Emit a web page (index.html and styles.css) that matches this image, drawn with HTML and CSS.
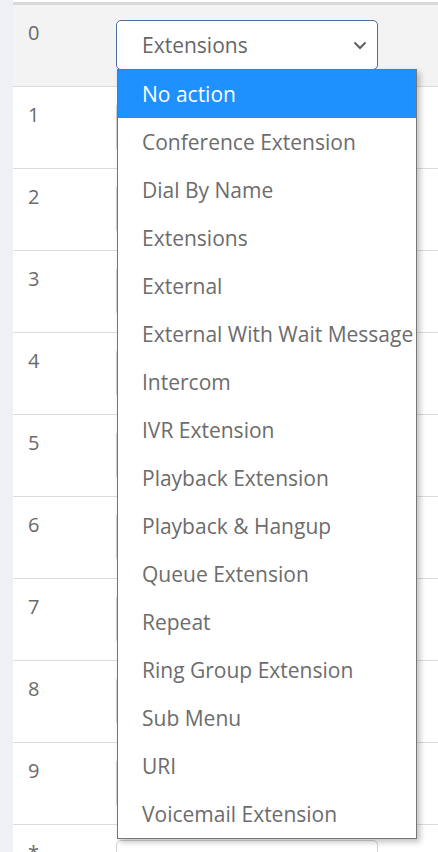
FILE: index.html
```html
<!DOCTYPE html>
<html lang="en">
  <head>
    <meta charset="utf-8" />
    <title>IVR Menu Options</title>
    <meta name="viewport" content="width=device-width, initial-scale=1" />
    <link rel="stylesheet" href="styles.css">
  </head>
  <body>
    <div class="page">
      <div class="side-strip"></div>
      <main class="options">
        <div class="option-row active">
          <div class="digit">0</div>
          <div class="action-cell">
            <div class="select focused">
              <span>Extensions</span>
              <svg class="chevron" width="14" height="9" viewBox="0 0 14 9"><path d="M1.5 1.5 L7 7 L12.5 1.5" fill="none" stroke="#5f5f5f" stroke-width="2"/></svg>
            </div>
            <ul class="dropdown">
              <li class="selected">No action</li>
              <li>Conference Extension</li>
              <li>Dial By Name</li>
              <li>Extensions</li>
              <li>External</li>
              <li>External With Wait Message</li>
              <li>Intercom</li>
              <li>IVR Extension</li>
              <li>Playback Extension</li>
              <li>Playback &amp; Hangup</li>
              <li>Queue Extension</li>
              <li>Repeat</li>
              <li>Ring Group Extension</li>
              <li>Sub Menu</li>
              <li>URI</li>
              <li>Voicemail Extension</li>
            </ul>
          </div>
        </div>
        <div class="option-row"><div class="digit">1</div><div class="action-cell"><div class="select"></div></div></div>
        <div class="option-row"><div class="digit">2</div><div class="action-cell"><div class="select"></div></div></div>
        <div class="option-row"><div class="digit">3</div><div class="action-cell"><div class="select"></div></div></div>
        <div class="option-row"><div class="digit">4</div><div class="action-cell"><div class="select"></div></div></div>
        <div class="option-row"><div class="digit">5</div><div class="action-cell"><div class="select"></div></div></div>
        <div class="option-row"><div class="digit">6</div><div class="action-cell"><div class="select"></div></div></div>
        <div class="option-row"><div class="digit">7</div><div class="action-cell"><div class="select"></div></div></div>
        <div class="option-row"><div class="digit">8</div><div class="action-cell"><div class="select"></div></div></div>
        <div class="option-row"><div class="digit">9</div><div class="action-cell"><div class="select"></div></div></div>
        <div class="option-row"><div class="digit">*</div><div class="action-cell"><div class="select"></div></div></div>
      </main>
    </div>
  </body>
</html>
```

FILE: styles.css
```css
body {
  margin: 0;
  font-family: "Open Sans", Arial, sans-serif;
  color: #6c6c6c;
  background: #fff;
  overflow: hidden;
}
.page {
  display: flex;
  height: 852px;
  overflow: hidden;
}
.side-strip {
  width: 13px;
  flex: none;
  background-color: #eff0f6;
}
.options {
  flex: 1;
  padding-top: 2px;
}
.option-row {
  display: flex;
  height: 81px;
  border-bottom: 1px solid #dcdcdc;
}
.option-row:first-child {
  border-top: 3px solid #d9d9d9;
}
.option-row.active {
  background-color: #f3f3f3;
}
.digit {
  width: 103px;
  flex: none;
  padding: 14px 0 0 15px;
  box-sizing: border-box;
  font-size: 20px;
  line-height: 28px;
  color: #6a6a6a;
}
.action-cell {
  position: relative;
  padding-top: 15px;
}
.select {
  width: 262px;
  height: 50px;
  box-sizing: border-box;
  border: 1px solid #d4d4d4;
  border-radius: 5px;
  background-color: #fff;
  display: flex;
  align-items: center;
  justify-content: space-between;
  padding: 0 10px 0 25px;
  font-size: 21px;
  color: #666;
}
.select.focused {
  border-color: #4d6d9a;
}
.chevron {
  margin-top: 1px;
}
.dropdown {
  position: absolute;
  top: 64px;
  left: 1px;
  z-index: 5;
  width: 300px;
  margin: 0;
  padding: 0;
  list-style: none;
  box-sizing: border-box;
  border: 1px solid #767676;
  background-color: #fff;
  box-shadow: 3px 3px 6px rgba(0, 0, 0, 0.25);
}
.dropdown li {
  height: 48px;
  line-height: 48px;
  padding-left: 24px;
  font-size: 21px;
  color: #6c6c6c;
  white-space: nowrap;
}
.dropdown li.selected {
  background-color: #1e90ff;
  color: #fff;
}
```
